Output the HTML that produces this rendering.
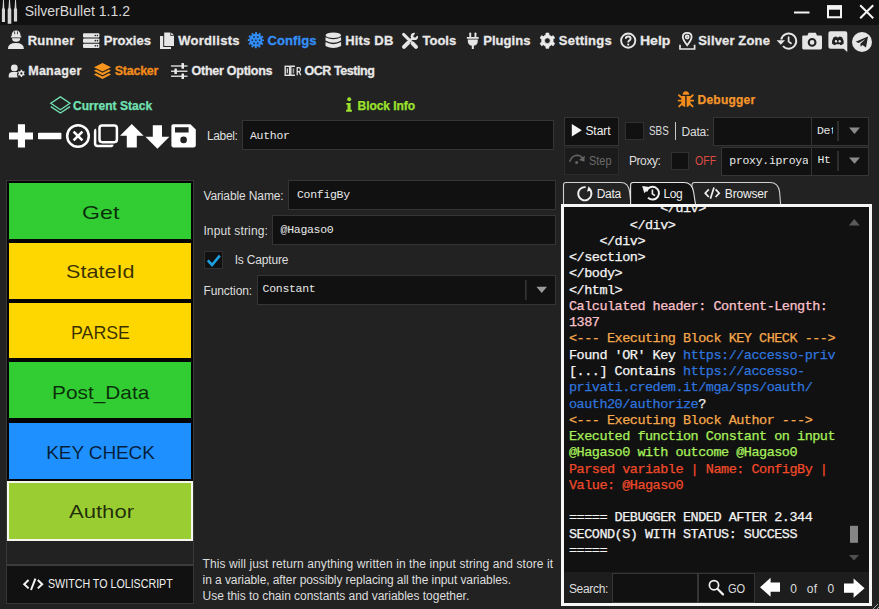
<!DOCTYPE html>
<html><head><meta charset="utf-8"><title>SilverBullet 1.1.2</title>
<style>
html,body{margin:0;padding:0;}
body{width:879px;height:609px;overflow:hidden;background:#222222;font-family:"Liberation Sans",sans-serif;color:#dcdcdc;position:relative;}
.a{position:absolute;white-space:nowrap;}
.t{position:absolute;white-space:nowrap;line-height:1;}
.m1{font-weight:bold;font-size:13px;color:#e8e8e8;top:34px;-webkit-text-stroke:0.3px;}
.m2{font-weight:bold;font-size:12.5px;color:#e8e8e8;top:64.5px;-webkit-text-stroke:0.3px;}
.hd{font-weight:bold;font-size:12px;-webkit-text-stroke:0.25px;}
.lbl{font-size:12px;color:#dedede;}
.mono{font-family:"Liberation Mono",monospace;font-size:11.5px;letter-spacing:-0.3px;color:#e8e8e8;}
.inp{position:absolute;background:#111111;border:1px solid #353535;box-sizing:border-box;}
.blk{position:absolute;left:9px;width:182px;height:56px;}
.bt{font-size:19px;color:rgba(0,0,0,0.78);}
#ico{position:absolute;left:0;top:0;width:879px;height:609px;overflow:visible;}
#log{position:absolute;left:569px;top:200.8px;width:290px;font-family:"Liberation Mono",monospace;font-size:13.5px;letter-spacing:-0.5px;line-height:16.26px;color:#f4f4f4;white-space:pre;-webkit-text-stroke:0.25px;}
#logclip{position:absolute;left:564px;top:207px;width:305px;height:365px;overflow:hidden;background:#111111;}
.pk{color:#fbc2cc}.or{color:#f6a94c}.bl{color:#2f74dc}.gr{color:#a8f05a}.rd{color:#f04a2a}
#title{letter-spacing:0.01px}
#m_runner{letter-spacing:0.20px}
#m_proxies{letter-spacing:0.02px}
#m_wordlists{letter-spacing:0.30px}
#m_configs{letter-spacing:0.10px}
#m_hits{letter-spacing:0.19px}
#m_tools{letter-spacing:0.04px}
#m_plugins{letter-spacing:0.06px}
#m_settings{letter-spacing:0.23px}
#m_help{transform:scaleX(1.076);transform-origin:0 50%}
#m_zone{letter-spacing:0.15px}
#s_manager{letter-spacing:0.28px}
#s_stacker{letter-spacing:-0.24px}
#s_other{letter-spacing:-0.25px}
#s_ocr{letter-spacing:-0.44px}
#h_stack{letter-spacing:0.04px}
#h_info{letter-spacing:-0.04px}
#h_dbg{letter-spacing:0.22px}
#l_label{letter-spacing:-0.33px}
#l_var{letter-spacing:-0.12px}
#l_in{letter-spacing:0.15px}
#l_cap{letter-spacing:-0.18px}
#l_fn{letter-spacing:-0.07px}
#t_start{letter-spacing:-0.03px}
#t_step{transform:scaleX(0.911);transform-origin:0 50%}
#t_sbs{transform:scaleX(0.820);transform-origin:0 50%}
#t_data{letter-spacing:-0.24px}
#t_proxy{letter-spacing:-0.39px}
#t_off{transform:scaleX(0.879);transform-origin:0 50%}
#tab_data{letter-spacing:-0.29px}
#tab_log{letter-spacing:-0.34px}
#tab_br{letter-spacing:-0.17px}
#t_search{letter-spacing:-0.32px}
#t_go{transform:scaleX(0.921);transform-origin:0 50%}
#t_of{letter-spacing:0.39px}
#switch_t{transform:scaleX(0.854);transform-origin:0 50%}
#d1{letter-spacing:0.09px}
#d2{letter-spacing:-0.08px}
#d3{letter-spacing:-0.03px}
#n1{transform:scaleX(1.221);transform-origin:0 50%}
#n2{transform:scaleX(1.136);transform-origin:0 50%}
#n3{transform:scaleX(0.936);transform-origin:0 50%}
#n4{transform:scaleX(1.097);transform-origin:0 50%}
#n5{letter-spacing:-0.11px}
#n6{transform:scaleX(1.161);transform-origin:0 50%}
</style></head><body>
<!-- title bar -->
<div class="a" id="titlebar" style="left:0;top:0;width:879px;height:25px;background:#111111"></div>
<svg id="und" style="position:absolute;left:0;top:0;width:879px;height:609px" viewBox="0 0 879 609">
<!-- tabs -->
<path d="M563.5 204.5 V185 Q563.5 182.5 566 182.5 H621 Q628.5 182.5 629.6 192 L631 204.5 Z" fill="#232323" stroke="#d0d0d0" stroke-width="1.1"/>
<path d="M692 204.5 V185 Q692 182.5 694.5 182.5 H770 Q778.4 182.5 779.6 192 L780.6 204.5 Z" fill="#232323" stroke="#d0d0d0" stroke-width="1.1"/>
<path d="M630.6 205 V185 Q630.6 182.5 633 182.5 H684 Q692 182.5 693.6 192 L695.6 205 Z" fill="#111111" stroke="#e4e4e4" stroke-width="1.1"/>
</svg>

<span class="t" id="title" style="left:24.7px;top:4.2px;font-size:14px;color:#d8d8d8">SilverBullet 1.1.2</span>
<!-- menu row 1 -->
<span class="t m1" id="m_runner" style="left:27.7px">Runner</span>
<span class="t m1" id="m_proxies" style="left:103.8px">Proxies</span>
<span class="t m1" id="m_wordlists" style="left:178.2px">Wordlists</span>
<span class="t m1" id="m_configs" style="left:267.5px;color:#3390fa">Configs</span>
<span class="t m1" id="m_hits" style="left:345.2px">Hits DB</span>
<span class="t m1" id="m_tools" style="left:422.4px">Tools</span>
<span class="t m1" id="m_plugins" style="left:483.2px">Plugins</span>
<span class="t m1" id="m_settings" style="left:558.8px">Settings</span>
<span class="t m1" id="m_help" style="left:640px">Help</span>
<span class="t m1" id="m_zone" style="left:698.3px">Silver Zone</span>
<!-- menu row 2 -->
<span class="t m2" id="s_manager" style="left:28.2px">Manager</span>
<span class="t m2" id="s_stacker" style="left:114.7px;color:#f28c1c">Stacker</span>
<span class="t m2" id="s_other" style="left:191.5px">Other Options</span>
<span class="t m2" id="s_ocr" style="left:304.5px">OCR Testing</span>
<!-- section headers -->
<span class="t hd" id="h_stack" style="left:73px;top:99.5px;color:#72e2b4">Current Stack</span>
<span class="t hd" id="h_info" style="left:357.5px;top:99.5px;color:#9be22d">Block Info</span>
<span class="t hd" id="h_dbg" style="left:697.6px;top:93.6px;color:#f5962a">Debugger</span>
<!-- label row -->
<span class="t lbl" id="l_label" style="left:206.9px;top:130px">Label:</span>
<div class="inp" id="i_label" style="left:242px;top:120px;width:312px;height:30px"></div>
<span class="t mono" id="v_label" style="left:250px;top:129.5px">Author</span>
<!-- stack list -->
<div class="a" id="stackbox" style="left:6px;top:180px;width:188px;height:385px;border:1px solid #383838;box-sizing:border-box;background:#222"></div>
<div class="a" id="stackblack" style="left:7px;top:181px;width:186px;height:300px;background:#050505"></div>
<div class="blk" id="b1" style="top:183px;background:#32cd32"></div>
<div class="blk" id="b2" style="top:243px;height:55.5px;background:#ffd700"></div>
<div class="blk" id="b3" style="top:302.5px;height:55.5px;background:#ffd700"></div>
<div class="blk" id="b4" style="top:362.2px;background:#32cd32"></div>
<div class="blk" id="b5" style="top:422.5px;background:#1e90ff"></div>
<div class="blk" id="b6" style="top:481px;left:7px;width:186px;height:60px;box-sizing:border-box;border:2px solid #f6f6ee;background:#9acd32"></div>
<span class="t bt" id="n1" style="left:81.6px;top:203.0px">Get</span>
<span class="t bt" id="n2" style="left:66.1px;top:262.3px">StateId</span>
<span class="t bt" id="n3" style="left:70.8px;top:322.6px">PARSE</span>
<span class="t bt" id="n4" style="left:51.7px;top:382.5px">Post_Data</span>
<span class="t bt" id="n5" style="left:46.3px;top:442.9px">KEY CHECK</span>
<span class="t bt" id="n6" style="left:68.6px;top:502.4px">Author</span>
<div class="a" id="switch" style="left:6px;top:564px;width:188px;height:40px;background:#111111;border:1px solid #363636;border-top:2px solid #3c3c3c;box-sizing:border-box"></div>
<span class="t" id="switch_t" style="left:48px;top:577.5px;font-size:12.5px;color:#f0f0f0">SWITCH TO LOLISCRIPT</span>
<!-- block form -->
<span class="t lbl" id="l_var" style="left:203.4px;top:189.5px">Variable Name:</span>
<div class="inp" id="i_var" style="left:288px;top:180px;width:268px;height:30px"></div>
<span class="t mono" id="v_var" style="left:297px;top:189.2px">ConfigBy</span>
<span class="t lbl" id="l_in" style="left:203.4px;top:224.5px">Input string:</span>
<div class="inp" id="i_in" style="left:272px;top:215px;width:284px;height:30px"></div>
<span class="t mono" id="v_in" style="left:280.6px;top:224.2px">@Hagaso0</span>
<div class="inp" id="cb" style="left:204px;top:251px;width:19px;height:18px;border-color:#303030"></div>
<span class="t lbl" id="l_cap" style="left:234.7px;top:254.2px">Is Capture</span>
<span class="t lbl" id="l_fn" style="left:203.4px;top:285.2px">Function:</span>
<div class="inp" id="i_fn" style="left:257px;top:275px;width:299px;height:30px"></div>
<span class="t mono" id="v_fn" style="left:262.6px;top:282.8px">Constant</span>
<span class="t lbl" id="d1" style="left:202.6px;top:558px">This will just return anything written in the input string and store it</span>
<span class="t lbl" id="d2" style="left:202.6px;top:574px">in a variable, after possibly replacing all the input variables.</span>
<span class="t lbl" id="d3" style="left:202.6px;top:590px">Use this to chain constants and variables together.</span>
<!-- debugger -->
<div class="inp" id="btn_start" style="left:564px;top:116.5px;width:55px;height:29px"></div>
<span class="t lbl" id="t_start" style="left:585.4px;top:124.8px;color:#f2f2f2">Start</span>
<div class="inp" id="btn_step" style="left:564px;top:146.5px;width:55px;height:28.5px;background:#1b1b1b;border-color:#2b2b2b"></div>
<span class="t lbl" id="t_step" style="left:588.9px;top:154.6px;color:#6a6a6a">Step</span>
<div class="inp" id="cb_sbs" style="left:625px;top:122px;width:19px;height:18px;border-color:#303030"></div>
<span class="t lbl" id="t_sbs" style="left:649.4px;top:124.8px">SBS</span>
<div class="a" style="left:674.5px;top:122px;width:1.5px;height:18px;background:#c8c8c8"></div>
<span class="t lbl" id="t_data" style="left:681.6px;top:125.6px">Data:</span>
<div class="inp" id="i_data" style="left:713px;top:116.5px;width:98.5px;height:29.5px"></div>
<div class="inp" id="c_data" style="left:811px;top:116.5px;width:57.5px;height:29.5px"></div>
<span class="t mono" id="v_de" style="left:817px;top:124.5px;width:15.5px;overflow:hidden">Det</span>
<span class="t lbl" id="t_proxy" style="left:628.9px;top:154.6px">Proxy:</span>
<div class="inp" id="cb_px" style="left:670.5px;top:151.5px;width:18px;height:18px;border-color:#303030"></div>
<span class="t lbl" id="t_off" style="left:694.5px;top:154.6px;color:#dc4a44">OFF</span>
<div class="inp" id="i_px" style="left:720.5px;top:146.5px;width:91px;height:29.5px"></div>
<span class="t mono" id="v_px" style="left:729.3px;top:154.5px;width:78.5px;overflow:hidden">proxy.iproyal</span>
<div class="inp" id="c_px" style="left:811px;top:146.5px;width:57.5px;height:29.5px"></div>
<span class="t mono" id="v_ht" style="left:817.5px;top:154px;width:15.5px;overflow:hidden">Ht</span>
<!-- log box -->
<div class="a" id="logbox" style="left:561px;top:204px;width:311px;height:401.5px;box-sizing:border-box;border:3px solid #f6f6f6;background:#1d1d1d"></div>
<div id="logclip"><div id="log" style="left:5px;top:-5.7px">            &lt;/div&gt;
        &lt;/div&gt;
    &lt;/div&gt;
&lt;/section&gt;
&lt;/body&gt;
&lt;/html&gt;
<span class="pk">Calculated header: Content-Length:
1387</span>
<span class="or">&lt;--- Executing Block KEY CHECK ---&gt;</span>
Found 'OR' Key <span class="bl">https://accesso-priv</span>
[...] Contains <span class="bl">https://accesso-
privati.credem.it/mga/sps/oauth/
oauth20/authorize</span>?
<span class="or">&lt;--- Executing Block Author ---&gt;</span>
<span class="gr">Executed function Constant on input
@Hagaso0 with outcome @Hagaso0</span>
<span class="rd">Parsed variable | Name: ConfigBy |
Value: @Hagaso0</span>

===== DEBUGGER ENDED AFTER 2.344
SECOND(S) WITH STATUS: SUCCESS
=====</div></div>
<span class="t lbl" id="t_search" style="left:568.9px;top:582.8px">Search:</span>
<div class="inp" id="i_search" style="left:612px;top:573px;width:86px;height:29.5px"></div>
<div class="inp" id="btn_go" style="left:697.5px;top:573px;width:57px;height:29.5px"></div>
<span class="t lbl" id="t_go" style="left:728.4px;top:582.8px">GO</span>
<span class="t lbl" id="t_0a" style="left:790.3px;top:582.6px">0</span><span class="t lbl" id="t_of" style="left:806.8px;top:582.6px">of</span><span class="t lbl" id="t_0b" style="left:827.5px;top:582.6px">0</span>
<!-- tab texts -->
<span class="t lbl" id="tab_data" style="left:596.7px;top:187.6px;color:#eee">Data</span>
<span class="t lbl" id="tab_log" style="left:663.4px;top:187.6px;color:#eee">Log</span>
<span class="t lbl" id="tab_br" style="left:724.8px;top:187.6px;color:#eee">Browser</span>
<svg id="ico" viewBox="0 0 879 609">
<g fill="#d6d6d6">
<!-- title bullets -->
<path d="M1.9 22 V9.6 L2.6 7.8 L3 0 H3.9 L4.3 7.8 L5 9.6 V22 Z"/>
<path d="M7.7 23.8 V9.6 L8.5 7.8 L9 0 H10 L10.5 7.8 L11.3 9.6 V23.8 Z"/>
<path d="M13.9 21.6 V9.6 L14.6 7.8 L15.1 0 H16 L16.4 7.8 L17.1 9.6 V21.6 Z"/>
</g>
<!-- window controls -->
<g fill="none" stroke="#f4f4f4">
<path d="M794 12.5 H809.5" stroke-width="2"/>
<path d="M828 6.3 H841 V17.3 H828 Z" stroke-width="2"/>
<path d="M827 7.5 H842" stroke-width="4.4"/>
<path d="M860.2 5.3 L873.2 18.3 M873.2 5.3 L860.2 18.3" stroke-width="2"/>
</g>
<!-- MENU ROW 1 ICONS -->
<g fill="#e6e6e6">
<!-- runner: user hard hat -->
<path d="M11.6 36 Q11.6 30.4 16.1 30.4 Q20.6 30.4 20.6 36 L21.3 36.5 V37.4 H10.9 V36.5 Z"/>
<path d="M12 38.2 H20.2 Q20.2 41.7 16.1 41.7 Q12 41.7 12 38.2 Z"/>
<path d="M7.9 48.9 Q7.9 43 15.9 43 Q23.9 43 23.9 48.9 Z"/>
<!-- proxies: server -->
<rect x="83" y="33.3" width="16.4" height="4.3" rx="1"/>
<rect x="83" y="38.5" width="16.4" height="4.3" rx="1"/>
<rect x="83" y="43.7" width="16.4" height="4.3" rx="1"/>
<!-- wordlists: copy -->
<path d="M160 36 H163.2 V47 H171 V49 H160 Z"/>
<path d="M164.2 32.4 H170.4 V36 H174 V46 H164.2 Z"/>
<path d="M171.2 32.6 L174 35.3 H171.2 Z"/>
<!-- hits db: database -->
<ellipse cx="333.3" cy="35.2" rx="7.8" ry="2.8"/>
<path d="M325.5 37.2 Q333.3 41.5 341.1 37.2 V40.6 Q333.3 45 325.5 40.6 Z"/>
<path d="M325.5 42 Q333.3 46.3 341.1 42 V46 Q333.3 50.2 325.5 46 Z"/>
</g>
<g fill="#222">
<rect x="14.3" y="31.4" width="0.8" height="2.8"/><rect x="17.1" y="31.4" width="0.8" height="2.8"/>
<circle cx="95.3" cy="35.45" r="0.8"/><circle cx="97.4" cy="35.45" r="0.8"/>
<circle cx="95.3" cy="40.65" r="0.8"/><circle cx="97.4" cy="40.65" r="0.8"/>
<circle cx="95.3" cy="45.85" r="0.8"/><circle cx="97.4" cy="45.85" r="0.8"/>
</g>
<!-- configs gear (blue) -->
<circle cx="255.9" cy="40.2" r="7.2" fill="none" stroke="#3390fa" stroke-width="1.8" stroke-dasharray="1.9 1.87" stroke-dashoffset="0.95"/>
<circle cx="255.9" cy="40.2" r="6.5" fill="#3390fa"/>
<g fill="#1c3c66"><circle cx="259.60" cy="40.20" r="1.05"/><circle cx="257.75" cy="43.40" r="1.05"/><circle cx="254.05" cy="43.40" r="1.05"/><circle cx="252.20" cy="40.20" r="1.05"/><circle cx="254.05" cy="37.00" r="1.05"/><circle cx="257.75" cy="37.00" r="1.05"/><circle cx="255.9" cy="40.2" r="1.0"/></g>
<!-- tools: wrench + screwdriver -->
<g stroke="#e6e6e6" fill="none" stroke-linecap="round">
<path d="M403.6 34.4 L408.6 39.4" stroke-width="3"/>
<path d="M408 38.8 L412 42.8" stroke-width="1.6"/>
<path d="M412.6 43.4 L416 46.8" stroke-width="4"/>
<path d="M404 46.8 L408 42.8" stroke-width="4"/>
<path d="M408.6 42.2 L412.6 38.2" stroke-width="2.4"/>
</g>
<circle cx="414.4" cy="36.4" r="3.7" fill="#e6e6e6"/>
<path d="M414 36.8 L415.2 32 L419.4 35.6 Z" fill="#222"/>
<circle cx="414.9" cy="35.9" r="1.5" fill="#222"/>
<!-- plugins: plug -->
<g fill="#e6e6e6">
<rect x="469.3" y="32.4" width="1.9" height="5" rx="0.9"/>
<rect x="474.5" y="32.4" width="1.9" height="5" rx="0.9"/>
<rect x="466.8" y="37" width="12" height="1.8" rx="0.6"/>
<path d="M467.8 39.4 H477.8 V41 Q477.8 45.6 472.8 45.8 Q467.8 45.6 467.8 41 Z"/>
<rect x="471.8" y="45" width="2" height="4" />
</g>
<!-- settings: cog -->
<path fill="#ececec" stroke="#ececec" stroke-width="0.8" stroke-linejoin="round" fill-rule="evenodd" d="M549.83 45.86 L548.99 46.17 L548.76 48.28 L546.04 48.28 L545.81 46.17 L544.97 45.86 L544.15 45.38 L543.45 44.81 L541.52 45.67 L540.16 43.31 L541.86 42.06 L541.72 41.18 L541.72 40.22 L541.86 39.34 L540.16 38.09 L541.52 35.73 L543.45 36.59 L544.15 36.02 L544.97 35.54 L545.81 35.23 L546.04 33.12 L548.76 33.12 L548.99 35.23 L549.83 35.54 L550.65 36.02 L551.35 36.59 L553.28 35.73 L554.64 38.09 L552.94 39.34 L553.08 40.22 L553.08 41.18 L552.94 42.06 L554.64 43.31 L553.28 45.67 L551.35 44.81 L550.65 45.38Z M547.4 37.8 A2.9 2.9 0 1 0 547.4 43.6 A2.9 2.9 0 1 0 547.4 37.8 Z"/>
<!-- help -->
<circle cx="628.2" cy="40.6" r="7.1" fill="none" stroke="#e6e6e6" stroke-width="1.9"/>
<path d="M625.8 38.8 Q625.8 36.5 628.2 36.5 Q630.6 36.5 630.6 38.6 Q630.6 39.9 629.2 40.6 Q628.2 41.1 628.2 42.4" fill="none" stroke="#e6e6e6" stroke-width="1.9"/>
<circle cx="628.2" cy="44.6" r="1.1" fill="#e6e6e6"/>
<!-- silver zone: map pin -->
<path d="M687.2 32.8 Q691.6 32.8 691.6 37 Q691.6 39.6 687.2 45.2 Q682.8 39.6 682.8 37 Q682.8 32.8 687.2 32.8 Z M687.2 35.5 A1.5 1.5 0 1 0 687.2 38.5 A1.5 1.5 0 1 0 687.2 35.5 Z" fill="none" stroke="#e6e6e6" stroke-width="1.8"/>
<path d="M680 44.8 V49 H694.6 V44.8" fill="none" stroke="#e6e6e6" stroke-width="1.7"/>
<!-- history -->
<path d="M781.2 39.5 A7.6 7.6 0 1 1 783 46.2" fill="none" stroke="#e6e6e6" stroke-width="1.9"/>
<path d="M776.6 40.2 H785 L780.8 44.8 Z" fill="#e6e6e6"/>
<path d="M788.6 36.4 V41.6 L791.6 43.8" fill="none" stroke="#e6e6e6" stroke-width="1.7"/>
<!-- camera -->
<path fill="#e6e6e6" fill-rule="evenodd" d="M803.6 35.4 H807.4 L808.6 32.8 H815.8 L817 35.4 H820.6 Q822 35.4 822 36.8 V48 Q822 49.4 820.6 49.4 H803.6 Q802.2 49.4 802.2 48 V36.8 Q802.2 35.4 803.6 35.4 Z M812.1 38 A4.4 4.4 0 1 0 812.1 46.8 A4.4 4.4 0 1 0 812.1 38 Z M812.1 40.1 A2.3 2.3 0 1 1 812.1 44.7 A2.3 2.3 0 1 1 812.1 40.1 Z"/>
<!-- discord -->
<path fill="#e6e6e6" d="M830.4 31.2 H845.3 Q847.3 31.2 847.3 33.2 V52 L843.6 48.8 H830.4 Q828.4 48.8 828.4 46.8 V33.2 Q828.4 31.2 830.4 31.2 Z"/>
<path fill="#222" d="M833.4 37.6 Q835.2 36.4 836.4 36.6 L836.8 37.2 H838.9 L839.3 36.6 Q840.5 36.4 842.3 37.6 Q844 40.6 843.6 43.8 Q842 45 840.4 45.2 L839.8 44.2 H835.9 L835.3 45.2 Q833.7 45 832.1 43.8 Q831.7 40.6 833.4 37.6 Z"/>
<ellipse cx="836" cy="41.2" rx="1.15" ry="1.3" fill="#e6e6e6"/><ellipse cx="839.7" cy="41.2" rx="1.15" ry="1.3" fill="#e6e6e6"/>
<!-- telegram -->
<circle cx="862" cy="42" r="10" fill="#e6e6e6"/>
<path fill="#222" d="M855.6 41.8 L868 36.6 L866 47.6 L862.4 45 L860.6 46.8 L860.4 43.8 L865.4 39 L858.8 43 Z"/>

<!-- MENU ROW 2 ICONS -->
<g fill="#e6e6e6">
<!-- manager: user cog -->
<circle cx="14.3" cy="67.9" r="3.4"/>
<path d="M8.7 77.6 V75.6 Q8.9 71.9 12.4 71.9 H17.6 Q16.2 74.8 17.8 77.6 Z"/>
<path fill-rule="evenodd" d="M22.51 75.75 L22.18 75.88 L22.11 76.93 L20.69 76.93 L20.62 75.88 L20.29 75.75 L19.92 75.53 L19.64 75.31 L18.70 75.78 L17.99 74.55 L18.86 73.97 L18.81 73.62 L18.81 73.18 L18.86 72.83 L17.99 72.25 L18.70 71.02 L19.64 71.49 L19.92 71.27 L20.29 71.05 L20.62 70.92 L20.69 69.87 L22.11 69.87 L22.18 70.92 L22.51 71.05 L22.88 71.27 L23.16 71.49 L24.10 71.02 L24.81 72.25 L23.94 72.83 L23.99 73.18 L23.99 73.62 L23.94 73.97 L24.81 74.55 L24.10 75.78 L23.16 75.31 L22.88 75.53Z M21.4 72.3 A1.1 1.1 0 1 0 21.4 74.5 A1.1 1.1 0 1 0 21.4 72.3 Z"/>
</g>
<!-- stacker: layers (orange) -->
<g fill="#f7951d">
<path d="M102.5 63 L111 67.2 L102.5 71.4 L94 67.2 Z"/>
<path d="M96 69.5 L102.5 72.7 L109 69.5 L111 70.8 L102.5 75.2 L94 70.8 Z"/>
<path d="M96 73.2 L102.5 76.4 L109 73.2 L111 74.5 L102.5 79 L94 74.5 Z"/>
</g>
<!-- other options: sliders -->
<g fill="none" stroke="#cfcfcf" stroke-width="1.5">
<path d="M171 65.9 H187.5 M171 71.2 H187.5 M171 76.3 H187.5"/>
</g>
<g fill="#ececec">
<rect x="181.5" y="63.1" width="2.5" height="5.6" rx="0.5"/>
<rect x="174.4" y="68.4" width="2.5" height="5.6" rx="0.5"/>
<rect x="181.5" y="73.5" width="2.5" height="5.5" rx="0.5"/>
</g>
<!-- OCR icon -->
<g fill="none" stroke="#e2e2e2" stroke-width="1.4">
<rect x="285.2" y="66.3" width="4.4" height="9"/>
<path d="M295 66.3 H290.8 V75.3 H295"/>
<path d="M297.2 75.2 V67.6 H299.2 Q300.5 67.8 300.5 69.6 Q300.5 71.4 299.2 71.6 H297.2 M299 71.6 L300.8 75.2" stroke-width="1.3"/>
</g>
<rect x="286.7" y="68.4" width="1.3" height="4.8" fill="#cfcfcf"/>
<rect x="292.6" y="68.2" width="1.6" height="5.2" fill="#9a9a9a"/>

<!-- SECTION HEADER ICONS -->
<g fill="none" stroke="#72e2b4" stroke-width="1.3" stroke-linejoin="miter">
<path d="M60.4 96.9 L70 103.3 L60.4 109.7 L50.8 103.3 Z"/>
<path d="M50.8 106.6 L60.4 113 L70 106.6"/>
</g>
<g fill="#9be22d">
<circle cx="349.2" cy="99.3" r="2"/>
<path d="M346.3 102.9 H350.6 V109.8 H351.9 V111.8 H346.1 V109.8 H347.5 V104.8 H346.3 Z"/>
</g>
<!-- bug -->
<g fill="#f28c1c">
<path d="M682.6 94.8 Q682.8 91.2 685.9 91.2 Q689 91.2 689.2 94.8 Z"/>
<path d="M681.4 96 H685.2 V107 Q681.4 106.4 681.4 102.6 Z"/>
<path d="M686.6 96 H690.4 V102.6 Q690.4 106.4 686.6 107 Z"/>
</g>
<g fill="none" stroke="#f28c1c" stroke-width="1.9" stroke-linecap="round">
<path d="M681.6 97.6 L679 95.2 M690.2 97.6 L692.8 95.2 M681.4 100.6 H678.6 M690.4 100.6 H693.2 M681.8 103.8 L679.2 106.4 M690 103.8 L692.6 106.4"/>
</g>

<!-- TOOLBAR ICONS -->
<g fill="#ffffff">
<path d="M17.9 124.2 H25 V132.6 H33 V139.4 H25 V147.4 H17.9 V139.4 H9 V132.6 H17.9 Z"/>
<rect x="38" y="132.8" width="23.4" height="6.4" rx="0.8"/>
<path d="M131.8 124 L143.6 135.8 H136.8 V147.4 H126.8 V135.8 H120 Z"/>
<path d="M157.4 148.8 L169.4 136.8 H162 V125.2 H152.8 V136.8 H145.4 Z"/>
<path fill-rule="evenodd" d="M173.2 124.2 H190.4 L195.8 129.6 V145.6 Q195.8 147.4 194 147.4 H173.2 Q171.4 147.4 171.4 145.6 V126 Q171.4 124.2 173.2 124.2 Z M175 127.2 V132.6 H188.6 V127.2 Z M183.6 136.6 A3.3 3.3 0 1 0 183.6 143.2 A3.3 3.3 0 1 0 183.6 136.6 Z"/>
</g>
<g fill="none" stroke="#ffffff">
<circle cx="78" cy="136" r="10.8" stroke-width="2.5"/>
<path d="M73.6 131.6 L82.4 140.4 M82.4 131.6 L73.6 140.4" stroke-width="2.6"/>
<rect x="99.5" y="125.4" width="17.4" height="16.8" rx="2.6" stroke-width="2.5"/>
<path d="M96.2 129.8 Q95 130 95.1 131.6 V143.8 Q95.2 146.1 97.6 146.1 H110.2 Q112.2 146.1 112.4 144.6" stroke-width="2.5"/>
</g>

<!-- SWITCH icon </> -->
<g fill="none" stroke="#f4f4f4" stroke-width="2">
<path d="M28.6 580 L24.2 584.2 L28.6 588.4 M37.8 580 L42.2 584.2 L37.8 588.4 M35.4 578.6 L31 590"/>
</g>

<!-- checkbox check -->
<path d="M207.8 260.4 L212 265 L219.8 255.6" fill="none" stroke="#1ba1e2" stroke-width="2.6"/>
<!-- function combo -->
<path d="M525.9 280 V300" stroke="#4a4a4a" stroke-width="1"/>
<path d="M536.4 286.8 H547 L541.7 293 Z" fill="#9a9a9a"/>

<!-- DEBUGGER -->
<path d="M571.8 124 L581.8 130.2 L571.8 136.4 Z" fill="#f4f4f4"/>
<g fill="none" stroke="#666" stroke-width="1.6">
<path d="M569.6 161.6 Q572 155.2 577.4 155.2 Q581.4 155.4 583 159.6"/>
</g>
<path d="M584.8 155.8 L584.4 161.8 L579 160 Z" fill="#666"/>
<circle cx="576.6" cy="162.6" r="1.5" fill="#666"/>
<!-- combos -->
<path d="M838 121 V141" stroke="#4a4a4a" stroke-width="1"/>
<path d="M849 127.6 H860 L854.5 134 Z" fill="#8a8a8a"/>
<path d="M838 151 V171" stroke="#4a4a4a" stroke-width="1"/>
<path d="M849 157.4 H860 L854.5 163.8 Z" fill="#8a8a8a"/>

<!-- tab icons -->
<path d="M589.6 189.2 A6.6 6.6 0 1 1 585.6 187.2" fill="none" stroke="#f0f0f0" stroke-width="1.9"/>
<path d="M588.6 186.2 L592 190.4 L587 191.4 Z" fill="#f0f0f0"/>
<path d="M646.4 191.6 A6.4 6.4 0 1 1 648 197.6" fill="none" stroke="#f0f0f0" stroke-width="2"/>
<path d="M642.2 186 L649.4 187 L644.4 193.2 Z" fill="#f0f0f0"/>
<path d="M652.4 189.4 V193.8 L655 195.6" fill="none" stroke="#f0f0f0" stroke-width="1.6"/>
<g fill="none" stroke="#f0f0f0" stroke-width="1.7">
<path d="M708.8 189.4 L705.2 193.2 L708.8 197 M715.6 189.4 L719.2 193.2 L715.6 197 M714 187.6 L710.4 198.8"/>
</g>

<!-- scrollbar -->
<path d="M848.8 225.4 H859.8 L854.3 219 Z" fill="#5a5a5a"/>
<path d="M849 555 H859 L854 560.4 Z" fill="#505050"/>
<rect x="850" y="525.8" width="8" height="17" fill="#858585"/>

<!-- search -->
<circle cx="714" cy="585.2" r="4.6" fill="none" stroke="#f0f0f0" stroke-width="1.7"/>
<path d="M717.4 588.8 L723 594.4" stroke="#f0f0f0" stroke-width="2.2" stroke-linecap="round"/>
<path d="M760 587.2 L770.6 577.8 V582.6 H780 V591.8 H770.6 V596.8 Z" fill="#ffffff"/>
<path d="M864.6 588.2 L853.6 578.6 V583.6 H844 V592.8 H853.6 V597.8 Z" fill="#ffffff"/>
<!-- resize grip -->
<path d="M878 604 L873 609 M879 607 L877 609" stroke="#aaa" stroke-width="1"/>
</svg>

</body></html>
